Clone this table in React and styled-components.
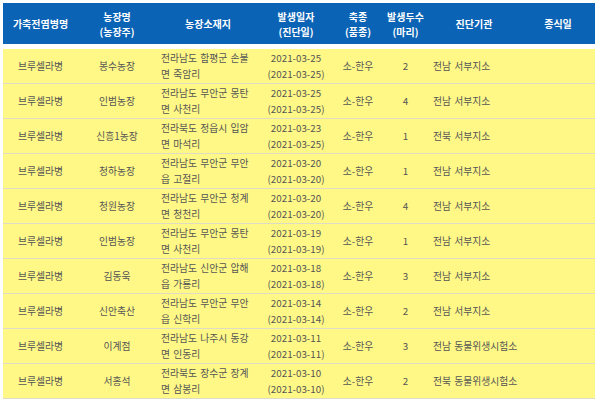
import React from "react";
import styled, { createGlobalStyle } from "styled-components";

const GlobalStyle = createGlobalStyle`
  html, body {
    margin: 0;
    padding: 0;
    background: #ffffff;
  }
  body {
    font-family: "Noto Sans CJK KR", "Noto Sans", sans-serif;
  }
`;

const COLS = "75px 78px 104px 72px 52px 43px 94px 74px";

const Page = styled.div`
  padding: 3px 5px 0 3px;
  width: 592px;
`;

const Head = styled.div`
  display: grid;
  grid-template-columns: ${COLS};
  height: 41px;
  background-color: #0b63b5;
  margin-bottom: 5px;
`;

const HeadCell = styled.div`
  display: flex;
  align-items: center;
  justify-content: center;
  text-align: center;
  color: #ffffff;
  font-weight: bold;
  font-size: 10px;
  line-height: 15px;
  white-space: pre-line;
`;

const Row = styled.div`
  display: grid;
  grid-template-columns: ${COLS};
  height: 34px;
  background-color: #fff886;
  border-bottom: 1px solid #dedcc4;
`;

const Cell = styled.div`
  display: flex;
  flex-direction: column;
  align-items: ${(p) => (p.$left ? "flex-start" : "center")};
  justify-content: center;
  text-align: ${(p) => (p.$left ? "left" : "center")};
  padding-left: ${(p) => p.$pad || 0}px;
  color: #555555;
  font-size: 9.8px;
  line-height: 16px;
  word-spacing: 1px;
  white-space: nowrap;
`;

const headers = [
  "가축전염병명",
  "농장명\n(농장주)",
  "농장소재지",
  "발생일자\n(진단일)",
  "축종\n(품종)",
  "발생두수\n(마리)",
  "진단기관",
  "종식일",
];

const rows = [
  ["봉수농장", ["전라남도 함평군 손불", "면 죽암리"], "2021-03-25", "2021-03-25", "2", "전남 서부지소"],
  ["인범농장", ["전라남도 무안군 몽탄", "면 사천리"], "2021-03-25", "2021-03-25", "4", "전남 서부지소"],
  ["신흥1농장", ["전라북도 정읍시 입암", "면 마석리"], "2021-03-23", "2021-03-25", "1", "전북 서부지소"],
  ["청하농장", ["전라남도 무안군 무안", "읍 고절리"], "2021-03-20", "2021-03-20", "1", "전남 서부지소"],
  ["청원농장", ["전라남도 무안군 청계", "면 청천리"], "2021-03-20", "2021-03-20", "4", "전남 서부지소"],
  ["인범농장", ["전라남도 무안군 몽탄", "면 사천리"], "2021-03-19", "2021-03-19", "1", "전남 서부지소"],
  ["김동욱", ["전라남도 신안군 압해", "읍 가룡리"], "2021-03-18", "2021-03-18", "3", "전남 서부지소"],
  ["신안축산", ["전라남도 무안군 무안", "읍 신학리"], "2021-03-14", "2021-03-14", "2", "전남 서부지소"],
  ["이계점", ["전라남도 나주시 동강", "면 인동리"], "2021-03-11", "2021-03-11", "3", "전남 동물위생시험소"],
  ["서홍석", ["전라북도 장수군 장계", "면 삼봉리"], "2021-03-10", "2021-03-10", "2", "전북 동물위생시험소"],
];

const App = () => {
  return (
    <>
      <GlobalStyle />
      <Page>
        <Head>
          {headers.map((h) => (
            <HeadCell key={h}>{h}</HeadCell>
          ))}
        </Head>
        {rows.map(([farm, addr, date, diag, count, lab], i) => (
          <Row key={i}>
            <Cell>브루셀라병</Cell>
            <Cell>{farm}</Cell>
            <Cell $left $pad={5}>
              <span>{addr[0]}</span>
              <span>{addr[1]}</span>
            </Cell>
            <Cell>
              <span>{date}</span>
              <span>({diag})</span>
            </Cell>
            <Cell>소-한우</Cell>
            <Cell>{count}</Cell>
            <Cell $left $pad={6}>{lab}</Cell>
            <Cell />
          </Row>
        ))}
      </Page>
    </>
  );
};

export default App;
